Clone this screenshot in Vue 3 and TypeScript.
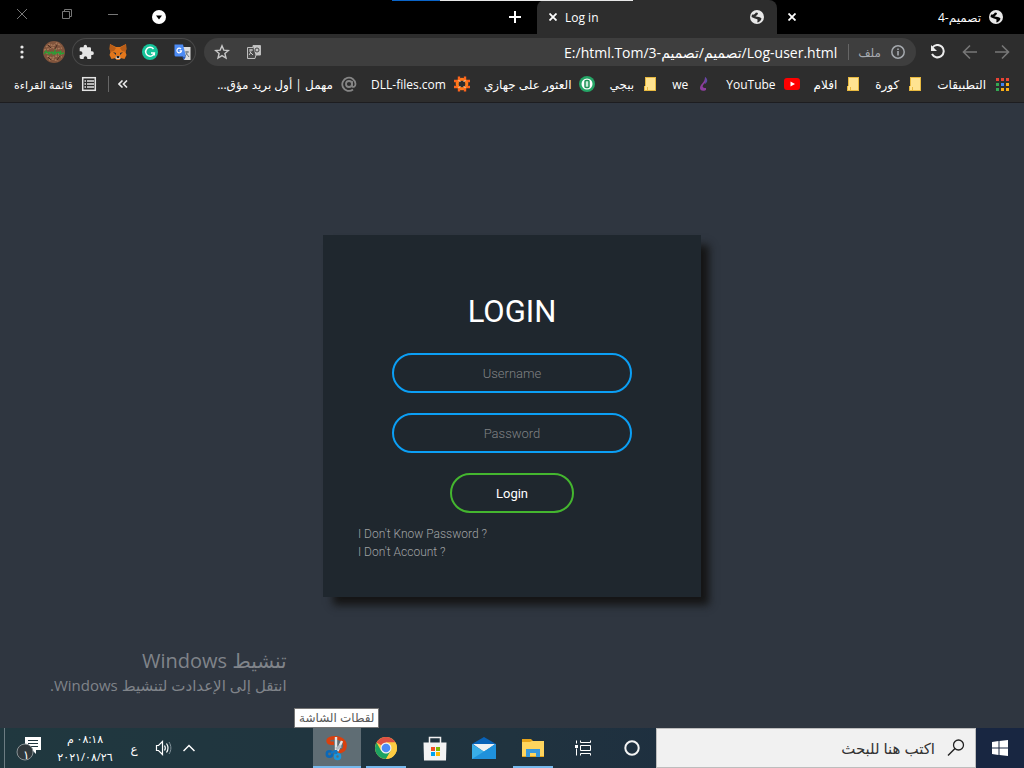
<script setup lang="ts">
import { ref } from 'vue'

interface Bookmark {
  label: string
  icon: string
}

const bookmarks: Bookmark[] = [
  { label: 'التطبيقات', icon: 'apps' },
  { label: 'كورة', icon: 'folder' },
  { label: 'افلام', icon: 'folder' },
  { label: 'YouTube', icon: 'youtube' },
  { label: 'we', icon: 'we' },
  { label: 'ببجي', icon: 'folder' },
  { label: 'العثور على جهازي', icon: 'device' },
  { label: 'DLL-files.com', icon: 'gear' },
  { label: 'مهمل | أول بريد مؤق...', icon: 'at' },
]

const appColors = ['#ea4335', '#ea4335', '#ea4335', '#34a853', '#4285f4', '#fbaf18', '#34a853', '#fbaf18', '#fbaf18']

const address = ref('E:/html.Tom/3-تصميم/تصميم/Log-user.html')
const username = ref('')
const password = ref('')
const query = ref('')
</script>

<template>
  <div class="screen">
    <header class="browser">
      <div class="tabstrip">
        <div class="loading"><i></i></div>
        <div class="window-controls">
          <button aria-label="إغلاق">
            <svg width="12" height="12" viewBox="0 0 12 12"><path d="M1 1l10 10M11 1L1 11" stroke="#777" fill="none" /></svg>
          </button>
          <button aria-label="استعادة">
            <svg width="12" height="12" viewBox="0 0 12 12"><path d="M1.500 3.500h7v7h-7zM3.500 3.500v-2h7v7h-2" stroke="#777" fill="none" /></svg>
          </button>
          <button aria-label="تصغير">
            <svg width="12" height="12" viewBox="0 0 12 12"><path d="M1 6.500h10" stroke="#777" fill="none" /></svg>
          </button>
          <button aria-label="بحث في علامات التبويب">
            <svg class="low" width="14" height="14" viewBox="0 0 14 14"><circle cx="7" cy="7" r="7" fill="#fff" /><path d="M4 5.500h6L7 9.500z" fill="#000" /></svg>
          </button>
        </div>
        <button class="new-tab" aria-label="علامة تبويب جديدة">
          <svg width="12" height="12" viewBox="0 0 12 12"><path d="M6 0v12M0 6h12" stroke="#fff" stroke-width="2" /></svg>
        </button>
        <div class="tab active">
          <button aria-label="إغلاق Log in">
            <svg width="8" height="8" viewBox="0 0 8 8"><path d="M0.500 0.500l7 7M7.500 0.500l-7 7" stroke="#fff" stroke-width="1.800" /></svg>
          </button>
          <span class="tab-title" dir="ltr">Log in</span>
          <svg width="14" height="14" viewBox="0 0 14 14"><circle cx="7" cy="7" r="7" fill="#e8e8e8" /><path d="M2 4.500C4 5 5 4 6 2.500l2 .5C8 5 6 5.500 5.500 6.500 8 7 10 6.500 11.500 8.500 11 10.500 9.500 12 7.500 12.500 7 10.500 8.500 9.500 6.500 9 4 8.500 3 7.500 1.500 7z" fill="#2d2d2d" /></svg>
        </div>
        <div class="tab">
          <button aria-label="إغلاق تصميم-4">
            <svg width="8" height="8" viewBox="0 0 8 8"><path d="M0.500 0.500l7 7M7.500 0.500l-7 7" stroke="#fff" stroke-width="1.800" /></svg>
          </button>
          <span class="tab-title" dir="rtl">تصميم-4</span>
          <svg width="14" height="14" viewBox="0 0 14 14"><circle cx="7" cy="7" r="7" fill="#e8e8e8" /><path d="M2 4.500C4 5 5 4 6 2.500l2 .5C8 5 6 5.500 5.500 6.500 8 7 10 6.500 11.500 8.500 11 10.500 9.500 12 7.500 12.500 7 10.500 8.500 9.500 6.500 9 4 8.500 3 7.500 1.500 7z" fill="#000" /></svg>
        </div>
      </div>

      <div class="toolbar">
        <button class="slot" aria-label="القائمة">
          <svg width="4" height="14" viewBox="0 0 4 14"><g fill="#e8e8e8"><circle cx="2" cy="2" r="1.600" /><circle cx="2" cy="7" r="1.600" /><circle cx="2" cy="12" r="1.600" /></g></svg>
        </button>
        <button class="slot" aria-label="الملف الشخصي">
          <svg width="22" height="22" viewBox="0 0 22 22">
            <circle cx="11" cy="11" r="11" fill="#80543c" />
            <path d="M3 6l4-3 3 2 4-3 4 3M1 9l5-1 3-2 4 2 6-1M4 15l5 2 4-2 6 1M6 19l4-1 5 2M3 12l16 1" stroke="#a8795a" stroke-width="1.500" stroke-dasharray="2 1" fill="none" />
            <path d="M5 4l3 3M14 4l-2 4M17 15l-3 4M5 16l3 3" stroke="#4a3024" />
            <path d="M1 13l2-3 1 2 2-1v2l3-2 1 2 2-3v3l3-2 1 1 2-2-1 3 4-1" stroke="#28a035" stroke-width="1.300" fill="none" />
          </svg>
        </button>
        <div class="extensions">
          <button aria-label="الإضافات">
            <svg width="16" height="16" viewBox="0 0 24 24"><path d="M21 11h-1.500V7c0-1.200-.9-2-2-2h-4V3.500a2.500 2.500 0 0 0-5 0V5h-4c-1.200 0-2 .9-2 2v4H4a2.700 2.700 0 0 1 0 5.400H2.500v4c0 1.200.9 2 2 2h4V21a2.700 2.700 0 0 1 5.400 0v1.500h4c1.200 0 2-.9 2-2v-4H21a2.700 2.700 0 0 0 0-5.500z" fill="#e6e6e6" /></svg>
          </button>
          <button aria-label="MetaMask">
            <svg width="18" height="16" viewBox="0 0 18 16"><path d="M1 0l6 3h4l6-3 .5 5-1 3 1 3-2 4-4-1-1 2H7.500l-1-2-4 1-2-4 1-3-1-3z" fill="#e2761b" /><path d="M1 0l6 4-2 3-4 1zM17 0l-6 4 2 3 4 1z" fill="#b85d18" /><path d="M4 8l3 1v2zM14 8l-3 1v2z" fill="#24303c" /><path d="M7 12h4l.5 3h-5z" fill="#d8c6b8" /><path d="M7.500 12h3l-.5 2H8z" fill="#202020" /></svg>
          </button>
          <button aria-label="Grammarly">
            <svg width="16" height="16" viewBox="0 0 16 16"><circle cx="8" cy="8" r="8" fill="#15c39a" /><path d="M11.500 5A4.400 4.400 0 1 0 12.300 9H9M12.300 8.500v3" stroke="#fff" stroke-width="1.500" fill="none" /></svg>
          </button>
          <button aria-label="ترجمة">
            <svg width="17" height="17" viewBox="0 0 17 17"><path d="M6 3h10.500v13H10z" fill="#dcdcdc" /><path d="M0.500 0.500H9l3 12H2a1.500 1.500 0 0 1-1.500-1.500z" fill="#4c8bf5" /><path d="M8 12.500h4L10 16z" fill="#2456b8" /><path d="M7 5a2.300 2.300 0 1 0 .5 1.800H5.500" stroke="#fff" fill="none" stroke-width="1.200" /><path d="M11 8h4M13 7v1c0 2-1 3-2 4M12 9l3 4" stroke="#6c7780" fill="none" /></svg>
          </button>
        </div>
        <div class="address">
          <button class="slot" aria-label="إضافة إشارة">
            <svg width="16" height="16" viewBox="0 0 16 16"><path d="M8 1.800l1.800 4.300 4.600.4-3.500 3 1.100 4.600L8 11.600l-4 2.500 1.100-4.600-3.500-3 4.600-.4z" stroke="#c8c8c8" stroke-width="1.400" fill="none" /></svg>
          </button>
          <button class="slot" aria-label="ترجمة هذه الصفحة">
            <svg width="14" height="14" viewBox="0 0 14 14"><path d="M6 .5h7.500v9.500H9l-1 3.500H.5V2.500H6z" fill="#4a4a4a" stroke="#bdbdbd" /><path d="M6 1h7v9H8.500z" fill="#c4c4c4" /><path d="M2 5h4M4 4v1c0 2-1 4-2 5M2.500 6.500L6 10" stroke="#ccc" fill="none" /><circle cx="10" cy="5" r="2" fill="none" stroke="#444" /></svg>
          </button>
          <input v-model="address" class="url" dir="ltr" aria-label="شريط العناوين" />
          <span class="bar"></span>
          <span class="scheme">ملف</span>
          <svg width="14" height="14" viewBox="0 0 14 14"><circle cx="7" cy="7" r="6.200" fill="none" stroke="#a5a9ae" stroke-width="1.500" /><path d="M7 6v4.500M7 3.500v1.500" stroke="#a5a9ae" stroke-width="1.600" /></svg>
        </div>
        <button class="slot" aria-label="إعادة التحميل">
          <svg width="16" height="16" viewBox="0 0 16 16"><path d="M2.500 3.500A6.200 6.200 0 1 1 2 10" fill="none" stroke="#ececec" stroke-width="2" /><path d="M1 1v6h6z" fill="#ececec" /></svg>
        </button>
        <button class="slot" aria-label="للأمام">
          <svg width="16" height="16" viewBox="0 0 16 16"><path d="M15 8H2M8 1.500L1.500 8 8 14.500" fill="none" stroke="#777" stroke-width="1.600" /></svg>
        </button>
        <button class="slot" aria-label="للخلف">
          <svg width="16" height="16" viewBox="0 0 16 16"><path d="M1 8h13M8 1.500L14.500 8 8 14.500" fill="none" stroke="#777" stroke-width="1.600" /></svg>
        </button>
      </div>

      <nav class="bookmarks" dir="rtl">
        <a v-for="mark in bookmarks" :key="mark.label" href="#" class="bookmark">
          <svg v-if="mark.icon === 'apps'" width="16" height="16" viewBox="0 0 16 16">
            <rect v-for="(color, i) in appColors" :key="i" :x="2 + (i % 3) * 5" :y="2 + Math.floor(i / 3) * 5" width="3" height="3" :fill="color" />
          </svg>
          <svg v-else-if="mark.icon === 'folder'" width="16" height="16" viewBox="0 0 16 16"><path d="M3 1h11v14H2v-4h1z" fill="#ffe391" /><path d="M3 1.500h11M3.500 1v9M13.500 1v14M2 14.500h12M2.500 10v5M5.500 11v4" stroke="#e8b93f" /></svg>
          <svg v-else-if="mark.icon === 'youtube'" width="16" height="16" viewBox="0 0 16 16"><rect y="2" width="16" height="12" rx="3" fill="#f00" /><path d="M6.500 5.500L11 8l-4.500 2.500z" fill="#fff" /></svg>
          <svg v-else-if="mark.icon === 'we'" width="16" height="16" viewBox="0 0 16 16"><path d="M9 1c3 3 1 5-1 7-2 2-2 4 2 4v2c-4 2-6 0-6-2 0-4 5-5 5-11z" fill="#8c3d9d" /><path d="M9 1c3 2 3 5 0 7 0-2 1-4 0-7z" fill="#5a4ca5" /></svg>
          <svg v-else-if="mark.icon === 'device'" width="16" height="16" viewBox="0 0 16 16"><circle cx="8" cy="8" r="8" fill="#25a566" /><circle cx="8" cy="8" r="5.500" fill="#fff" /><rect x="6" y="4.500" width="4" height="7" rx="1" fill="#c9ecd8" stroke="#1e9156" stroke-width="1.500" /></svg>
          <svg v-else-if="mark.icon === 'gear'" width="16" height="16" viewBox="0 0 16 16"><circle cx="8" cy="8" r="4.800" fill="none" stroke="#ff7a1c" stroke-width="3" /><path d="M5 .5v3M11 .5v3M5 12.500v3M11 12.500v3M0 5h3M0 11h3M13 5h3M13 11h3" stroke="#ff641c" stroke-width="2.400" /><path d="M4.500 4.500l2 1M11.500 4.500l-2 1M4.500 11.500l2-1M11.500 11.500l-2-1" stroke="#e8d2c4" /></svg>
          <svg v-else width="16" height="16" viewBox="0 0 16 16"><circle cx="8" cy="8" r="3" fill="none" stroke="#858585" stroke-width="1.800" /><path d="M11 5v5c1 2 3.500.5 3.500-2A6.600 6.600 0 1 0 12 13.500" fill="none" stroke="#858585" stroke-width="1.800" /></svg>
          <span>{{ mark.label }}</span>
        </a>
        <div class="bookmarks-end">
          <button class="more" aria-label="المزيد">
            <svg width="10" height="8" viewBox="0 0 10 8"><path d="M4.500 .5L1 4l3.500 3.500M9 .5L5.500 4 9 7.500" stroke="#e8e8e8" stroke-width="1.600" fill="none" /></svg>
          </button>
          <span class="bar"></span>
          <a href="#" class="bookmark reading">
            <svg width="16" height="16" viewBox="0 0 16 16"><rect x="1.700" y="1.700" width="12.600" height="12.600" fill="none" stroke="#e4e4e4" stroke-width="1.500" /><path d="M6 5h7M6 8h7M6 11h7M3.500 5H5M3.500 8H5M3.500 11H5" stroke="#e4e4e4" stroke-width="1.500" /></svg>
            <span>قائمة القراءة</span>
          </a>
        </div>
      </nav>
    </header>

    <main class="page">
      <form class="login" @submit.prevent>
        <h1>LOGIN</h1>
        <input v-model="username" type="text" placeholder="Username" aria-label="Username" />
        <input v-model="password" type="password" placeholder="Password" aria-label="Password" />
        <button type="submit">Login</button>
        <div class="links">
          <a href="#">I Don't Know Password ?</a>
          <a href="#">I Don't Account ?</a>
        </div>
      </form>
      <div class="watermark" dir="rtl">
        <p class="big">تنشيط Windows</p>
        <p>انتقل إلى الإعدادت لتنشيط Windows.</p>
      </div>
      <div class="tooltip" dir="rtl">لقطات الشاشة</div>
    </main>

    <footer class="taskbar">
      <div class="tray">
        <button class="notify" aria-label="الإشعارات">
          <svg width="26" height="26" viewBox="0 0 26 26"><path d="M9 2h16v13h-5v4l-4-4H9z" fill="#fff" /><path d="M12 5.500h10M12 8.500h10M14 11.500h8" stroke="#20363f" /><circle cx="9" cy="17" r="8" fill="#30383c" stroke="#8a9396" /></svg>
          <span class="count">١</span>
        </button>
        <div class="clock" dir="rtl"><span>٠٨:١٨ م</span><span>٢٠٢١/٠٨/٢٦</span></div>
        <button class="lang">ع</button>
        <button class="tray-icon" aria-label="الصوت">
          <svg width="18" height="16" viewBox="0 0 18 16"><path d="M1.500 5.500h2l4-4v13l-4-4h-2z" fill="none" stroke="#fff" stroke-width="1.200" /><path d="M9.500 5.500c1 1.500 1 3.500 0 5M11.500 3.500c2 3 2 6 0 9" fill="none" stroke="#fff" stroke-width="1.200" /><path d="M14 2c2.500 4 2.500 8 0 12" fill="none" stroke="#82929a" /></svg>
        </button>
        <button class="tray-icon" aria-label="إظهار الرموز المخفية">
          <svg width="12" height="8" viewBox="0 0 12 8"><path d="M.5 7L6 1.500 11.500 7" fill="none" stroke="#fff" stroke-width="1.500" /></svg>
        </button>
      </div>
      <div class="apps">
        <button class="app current" aria-label="لقطات الشاشة">
          <svg width="24" height="26" viewBox="0 0 24 26"><path d="M9 8C2 9 1 4 7 3c8-1.500 13 3 13 7.500s-3 6-6.500 6" fill="none" stroke="#d9400e" stroke-width="3.600" /><path d="M11 2v14M12.500 16l4.500-10" stroke="#e0e5e8" stroke-width="2.400" /><path d="M11 14l5-3" stroke="#b2bcc2" stroke-width="3" /><circle cx="4.500" cy="19" r="2.700" fill="none" stroke="#0b68b8" stroke-width="2.500" /><circle cx="12.500" cy="21.500" r="2.500" fill="none" stroke="#1b95dc" stroke-width="2.500" /><path d="M6 18l4-2M11 19v-4" stroke="#1277c5" stroke-width="2.500" /></svg>
        </button>
        <button class="app open" aria-label="Chrome">
          <svg width="24" height="24" viewBox="0 0 24 24"><circle cx="12" cy="12" r="11" fill="#ffcd42" /><path d="M12 12L2.500 6.500A11 11 0 0 1 21.500 6.500H12z" fill="#dd5144" /><path d="M2.500 6.500A11 11 0 0 0 12 23l5-8.500-5 3-5-3z" fill="#1da362" /><path d="M21.500 6.500H12l5 8L12 23A11 11 0 0 0 21.500 6.500z" fill="#ffcd42" /><circle cx="12" cy="12" r="5.500" fill="#f1f1f1" /><circle cx="12" cy="12" r="4.300" fill="#4c8bf5" /></svg>
        </button>
        <button class="app" aria-label="Microsoft Store">
          <svg width="24" height="26" viewBox="0 0 24 26"><path d="M6.500 8V2.500h11V8" fill="none" stroke="#f1f1f1" stroke-width="1.500" /><path d="M.5 7.500h23l-.5 18H1z" fill="#f3f3f3" /><path d="M8 12h4v4H8z" fill="#f25022" /><path d="M13 12h4v4h-4z" fill="#7fba00" /><path d="M8 17h4v4H8z" fill="#00a4ef" /><path d="M13 17h4v4h-4z" fill="#ffb900" /></svg>
        </button>
        <button class="app" aria-label="البريد">
          <svg width="24" height="24" viewBox="0 0 24 24"><path d="M0 8l12-7 12 7v4H0z" fill="#0963b8" /><path d="M1 8h22L12 16z" fill="#f0f2f3" /><path d="M0 8l12 7.500L24 8v15H0z" fill="#39aee8" /><path d="M0 23l24-15v15z" fill="#1f91dc" /></svg>
        </button>
        <button class="app open" aria-label="مستكشف الملفات">
          <svg width="24" height="22" viewBox="0 0 24 22"><path d="M1 2h9l2 2h11v16H1z" fill="#e7a41a" /><path d="M1 5h8l2-1h12v15H1z" fill="#ffd55e" /><path d="M5 12h14v8h-4v-4H9v4H5z" fill="#3898dc" /></svg>
        </button>
        <button class="app task" aria-label="عرض المهام">
          <svg width="18" height="18" viewBox="0 0 18 18"><path d="M6.500 1.500v2h10v-2M6.500 6.500h10v5h-10zM6.500 16.500v-2h10v2M2.500 1.500v3M2.500 9.500v7" fill="none" stroke="#fff" /><path d="M1 6h3v3H1z" fill="#fff" /></svg>
        </button>
        <button class="app" aria-label="Cortana">
          <svg width="16" height="16" viewBox="0 0 16 16"><circle cx="8" cy="8" r="6.700" fill="none" stroke="#f4f4f4" stroke-width="2" /></svg>
        </button>
      </div>
      <label class="search" dir="rtl">
        <svg width="18" height="18" viewBox="0 0 18 18"><circle cx="11.500" cy="6" r="5" fill="none" stroke="#222" stroke-width="1.300" /><path d="M8 9.500L1 16.500" stroke="#222" stroke-width="1.500" /></svg>
        <input v-model="query" type="text" placeholder="اكتب هنا للبحث" aria-label="اكتب هنا للبحث" />
      </label>
      <button class="start" aria-label="ابدأ">
        <svg width="16" height="16" viewBox="0 0 16 16"><path d="M0 2l6.500-.9v6.400H0zM7.500 1L16 0v7.500H7.500zM0 8.500h6.500v6.400L0 14zM7.500 8.500H16V16l-8.500-1z" fill="#fff" /></svg>
      </button>
    </footer>
  </div>
</template>

<style>
body {
  margin: 0;
  background: #2f3640;
}
</style>

<style scoped>
.screen {
  display: flex;
  flex-direction: column;
  min-height: 100vh;
  font-family: "Open Sans", "Noto Sans", "DejaVu Sans", sans-serif;
  font-size: 12px;
  color: #fff;
  background: #2f3640;
}
button {
  display: flex;
  align-items: center;
  justify-content: center;
  padding: 0;
  border: 0;
  background: none;
  color: inherit;
  font: inherit;
}
a {
  color: inherit;
  text-decoration: none;
}
input {
  box-sizing: border-box;
  min-width: 0;
  border: 0;
  padding: 0;
  outline: none;
  background: none;
  color: inherit;
  font: inherit;
}
svg {
  flex: none;
  display: block;
}
.browser {
  background: #2d2d2d;
  border-bottom: 1px solid #1d1d20;
}
.tabstrip {
  position: relative;
  display: flex;
  height: 34px;
  background: #000;
}
.loading {
  position: absolute;
  top: 0;
  left: 392px;
  width: 241px;
  height: 1px;
  background: #e8e8e8;
}
.loading i {
  display: block;
  width: 48px;
  height: 1px;
  background: #0a64c8;
}
.window-controls {
  display: flex;
  flex: 1;
}
.window-controls button {
  width: 46px;
  height: 28px;
}
.window-controls button:first-child {
  width: 44px;
}
.window-controls .low {
  margin-top: 6px;
}
.new-tab {
  width: 44px;
}
.tab {
  display: flex;
  align-items: center;
  gap: 8px;
  width: 240px;
  padding: 0 13px 0 12px;
  box-sizing: border-box;
}
.tab.active {
  background: #2d2d2d;
  border-radius: 8px 8px 0 0;
}
.tab:last-child {
  width: 247px;
  padding: 0 21px 0 11px;
}
.tab-title {
  flex: 1;
}
.toolbar {
  display: flex;
  align-items: center;
  height: 36px;
  padding: 0 6px;
}
.slot {
  width: 32px;
  height: 28px;
}
.extensions {
  display: flex;
  gap: 4px;
  margin: 0 8px 0 2px;
  border-radius: 14px;
  box-shadow: inset 0 0 0 1px #484848;
}
.extensions button {
  width: 28px;
  height: 28px;
}
.address {
  display: flex;
  align-items: center;
  flex: 1;
  height: 28px;
  margin-right: 6px;
  padding: 0 11px 0 2px;
  border-radius: 14px;
  background: #3e3e3e;
}
.url {
  flex: 1;
  font-size: 14px;
  text-align: right;
}
.bar {
  width: 1px;
  height: 16px;
  margin: 0 9px 0 11px;
  background: #666;
}
.scheme {
  margin-right: 10px;
  color: #a5a9ae;
}
.bookmarks {
  display: flex;
  align-items: center;
  gap: 14px;
  height: 28px;
  padding: 0 14px 4px;
  white-space: nowrap;
}
.bookmark {
  display: flex;
  align-items: center;
  gap: 8px;
}
.reading {
  font-size: 11px;
}
.bookmarks-end {
  display: flex;
  align-items: center;
  margin-right: auto;
}
.page {
  position: relative;
  display: flex;
  flex: 1;
  align-items: center;
  justify-content: center;
  padding-top: 1px;
}
.login {
  display: flex;
  flex-direction: column;
  align-items: center;
  gap: 20px;
  box-sizing: border-box;
  width: 378px;
  padding: 56px 35px 36px;
  background: #1f272e;
  box-shadow: 9px 9px 8px -1px #151515;
  font-family: Roboto, sans-serif;
  font-size: 13px;
}
.login h1 {
  margin: 0;
  font-size: 31px;
  line-height: 42px;
  font-weight: 400;
}
.login input {
  width: 240px;
  height: 40px;
  border: 2px solid #0b9ff5;
  border-radius: 20px;
  text-align: center;
}
.login input::placeholder {
  color: #808284;
  font-weight: 300;
  opacity: 1;
}
.login button {
  width: 124px;
  height: 40px;
  border: 2px solid #44b62f;
  border-radius: 20px;
}
.links {
  display: flex;
  flex-direction: column;
  align-self: stretch;
  align-items: flex-start;
  margin-top: -8px;
  font-size: 12px;
  line-height: 18px;
  font-weight: 300;
  color: #a0a3a5;
}
.watermark {
  position: absolute;
  left: 50px;
  bottom: 32px;
  font-size: 15px;
  line-height: 22px;
  color: #80848a;
}
.watermark p {
  margin: 0;
  white-space: nowrap;
}
.watermark .big {
  font-size: 20px;
  line-height: 26px;
}
.tooltip {
  position: absolute;
  left: 294px;
  bottom: 0;
  box-sizing: border-box;
  height: 20px;
  padding: 0 4px;
  border: 1px solid #767676;
  background: #fff;
  color: #575757;
  line-height: 18px;
}
.taskbar {
  display: flex;
  height: 40px;
  background: linear-gradient(90deg, #20383f, #20333f 50%, #1a2740);
}
.tray {
  display: flex;
  align-items: center;
  flex: 1;
  margin-left: 4px;
  border-left: 1px solid #6c7c82;
}
.notify {
  position: relative;
  width: 48px;
  height: 40px;
}
.count {
  position: absolute;
  left: 18px;
  bottom: 6px;
  line-height: 14px;
}
.clock {
  display: flex;
  flex-direction: column;
  align-items: center;
  width: 64px;
  font-size: 11px;
  line-height: 18px;
}
.lang {
  width: 34px;
}
.tray-icon {
  width: 25px;
  height: 40px;
}
.apps {
  display: flex;
  gap: 1px;
}
.app {
  box-sizing: border-box;
  width: 48px;
  height: 40px;
}
.task {
  margin-left: 1px;
}
.app.current {
  background: #5f6d74;
  box-shadow: inset 0 -2px #76b9ed;
}
.app.open {
  background: linear-gradient(#76b9ed, #76b9ed) center bottom / 40px 2px no-repeat;
}
.search {
  display: flex;
  align-items: center;
  gap: 12px;
  box-sizing: border-box;
  width: 320px;
  padding: 0 10px;
  border: 1px solid #bdbdbd;
  background: #f1f1f1;
  color: #222;
}
.search input {
  flex: 1;
  font-size: 15px;
}
.search input::placeholder {
  color: #333;
  opacity: 1;
}
.start {
  width: 48px;
  background: #182641;
}
</style>
